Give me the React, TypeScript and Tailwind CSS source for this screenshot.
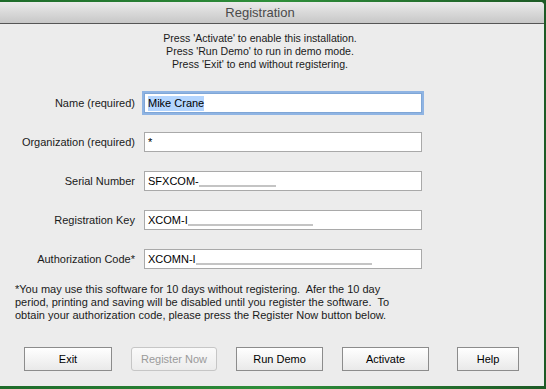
import React from "react";

const fields = [
  { label: "Name (required)", value: "Mike Crane", focused: true },
  { label: "Organization (required)", value: "*" },
  { label: "Serial Number", value: "SFXCOM-", line: "w-[77px]" },
  { label: "Registration Key", value: "XCOM-I", line: "w-[125px]" },
  { label: "Authorization Code*", value: "XCOMN-I", line: "w-[176px]" },
];

function Field({ label, value, focused, line }: { label: string; value: string; focused?: boolean; line?: string }) {
  return (
    <div className="flex items-center h-5">
      <div className="w-[136px] pr-[1px] text-right text-[11px] text-[#1a1a1a]">{label}</div>
      <div
        className={
          "ml-[8px] w-[278px] h-5 bg-white flex items-center pl-[3px] text-[11px] text-black " +
          (focused
            ? "border border-[#7fa6d6] shadow-[0_0_0_2px_#8fb4e3]"
            : "border border-[#a9a9a9]")
        }
      >
        {focused ? <span className="bg-[#b4d5fe] leading-[15px]">{value}</span> : <span>{value}</span>}
        {line && <span className={"self-end mb-[3px] h-[2px] bg-[#c4c4c4] " + line}></span>}
      </div>
    </div>
  );
}

function Btn({ children, disabled, w }: { children: React.ReactNode; disabled?: boolean; w: string }) {
  return (
    <button
      type="button"
      className={
        "h-6 text-[11px] flex items-center justify-center " +
        w +
        (disabled
          ? " rounded-[3px] border border-[#c6c6c6] bg-gradient-to-b from-[#fafafa] to-[#ececec] text-[#9a9a9a]"
          : " border border-[#8c8c8c] bg-gradient-to-b from-white to-[#e9e9e9] text-black")
      }
    >
      {children}
    </button>
  );
}

export default function App() {
  return (
    <div
      className="w-[546px] h-[389px] bg-gradient-to-r from-[#1e6b2a] via-[#2e8f3a] to-[#1d5a25] pt-[2px] pr-[2px] pb-[3px] overflow-hidden"
      style={{ fontFamily: '"Liberation Sans", Arial, sans-serif' }}
    >
      <div className="h-full flex flex-col bg-[#ececec] rounded-tr-[4px] overflow-hidden">
        <div className="h-[22px] shrink-0 flex items-center justify-center pr-[24px] bg-gradient-to-b from-[#ebebeb] to-[#c7c7c7] border-b border-[#555] text-[13px] text-[#4a4a4a]">
          Registration
        </div>
        <div className="flex flex-col items-center mt-[8px] pr-[24px] text-[10.6px] leading-[13px] text-[#1a1a1a]">
          <div>Press 'Activate' to enable this installation.</div>
          <div>Press 'Run Demo' to run in demo mode.</div>
          <div>Press 'Exit' to end without registering.</div>
        </div>
        <div className="flex flex-col gap-[19px] mt-[22px]">
          {fields.map((f) => (
            <Field key={f.label} {...f} />
          ))}
        </div>
        <div className="mt-[14px] pl-[15px] pr-[20px] text-[11px] leading-[13px] text-[#1a1a1a]">
          <div>*You may use this software for 10 days without registering.&nbsp; Afer the 10 day</div>
          <div>period, printing and saving will be disabled until you register the software.&nbsp; To</div>
          <div>obtain your authorization code, please press the Register Now button below.</div>
        </div>
        <div className="flex mt-[25px] pl-[24px]">
          <Btn w="w-[88px]">Exit</Btn>
          <div className="ml-[19px]">
            <Btn w="w-[86px]" disabled>
              Register Now
            </Btn>
          </div>
          <div className="ml-[19px]">
            <Btn w="w-[87px]">Run Demo</Btn>
          </div>
          <div className="ml-[19px]">
            <Btn w="w-[87px]">Activate</Btn>
          </div>
          <div className="ml-[28px]">
            <Btn w="w-[62px]">Help</Btn>
          </div>
        </div>
      </div>
    </div>
  );
}
